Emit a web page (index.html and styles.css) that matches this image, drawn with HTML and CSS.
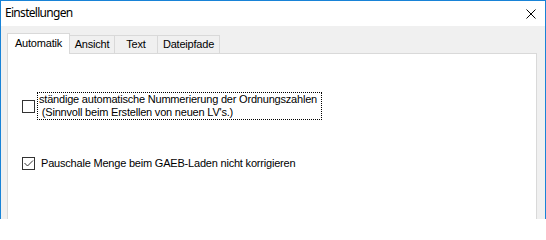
FILE: index.html
```html
<!DOCTYPE html>
<html>
<head>
<meta charset="utf-8">
<link rel="stylesheet" href="styles.css">
</head>
<body>
<div class="window">
  <div class="titlebar">
    <span class="title">Einstellungen</span>
    <svg class="close" width="10" height="10" viewBox="0 0 10 10"><path d="M0.5 0.5 L9.5 9.5 M9.5 0.5 L0.5 9.5" stroke="#000" stroke-width="1"/></svg>
  </div>
  <div class="client">
    <div class="tabs">
      <div class="tab active">Automatik</div>
      <div class="tab t-ansicht">Ansicht</div>
      <div class="tab t-text">Text</div>
      <div class="tab t-datei">Dateipfade</div>
    </div>
    <div class="panel">
      <div class="option opt1">
        <span class="box"></span>
        <span class="label focus">ständige automatische Nummerierung der Ordnungszahlen<br>&nbsp;(Sinnvoll beim Erstellen von neuen LV's.)</span>
      </div>
      <div class="option opt2">
        <span class="box checked"><svg width="11" height="11" viewBox="0 0 11 11"><path d="M1.5 5 L4.5 8 L10 2.5" fill="none" stroke="#333" stroke-width="1"/></svg></span>
        <span class="label">Pauschale Menge beim GAEB-Laden nicht korrigieren</span>
      </div>
    </div>
  </div>
</div>
</body>
</html>
```
FILE: styles.css
```css
html, body {
  margin: 0;
  padding: 0;
  background: #ffffff;
}
.window {
  width: 546px;
  height: 219px;
  box-sizing: border-box;
  border: 1px solid #1883d7;
  border-bottom: none;
  display: flex;
  flex-direction: column;
  overflow: hidden;
}
.titlebar {
  height: 25px;
  background: #ffffff;
  display: flex;
  align-items: center;
  justify-content: space-between;
  padding: 0 9px 0 4px;
  flex: none;
}
.title {
  font-family: "Noto Sans", "Open Sans", sans-serif;
  font-size: 12px;
  letter-spacing: -0.7px;
  color: #000;
  margin-top: -2px;
}
.close {
  display: block;
}
.client {
  flex: 1;
  background: #f0f0f0;
  padding: 7px 8px 0 6px;
  display: flex;
  flex-direction: column;
}
.tabs {
  display: flex;
  align-items: flex-end;
  height: 20px;
  position: relative;
  z-index: 1;
}
.tab {
  font-family: "Liberation Sans", Arial, sans-serif;
  font-size: 11px;
  letter-spacing: -0.2px;
  color: #000;
  box-sizing: border-box;
  height: 18px;
  border: 1px solid #d9d9d9;
  border-bottom: none;
  border-left: none;
  background: #f0f0f0;
  padding-top: 2px;
  text-align: center;
}
.tab.active {
  height: 21px;
  margin-bottom: -1px;
  background: #ffffff;
  border-left: 1px solid #d9d9d9;
  width: 63px;
  padding-top: 3px;
}
.t-ansicht { width: 45px; }
.t-text { width: 43px; }
.t-datei { width: 62px; }
.panel {
  flex: 1;
  background: #ffffff;
  border: 1px solid #d9d9d9;
  border-bottom: none;
  padding: 38px 0 0 14px;
  display: flex;
  flex-direction: column;
}
.option {
  display: flex;
  align-items: center;
  font-family: "Liberation Sans", Arial, sans-serif;
  font-size: 11px;
  letter-spacing: -0.2px;
  color: #000;
}
.box {
  width: 13px;
  height: 13px;
  box-sizing: border-box;
  border: 1px solid #333333;
  background: #fff;
  flex: none;
  display: flex;
  align-items: center;
  justify-content: center;
}
.box svg { display: block; }
.label {
  line-height: 13px;
}
.opt1 .label {
  margin-left: 2px;
  border: 1px dotted #000;
  padding: 0 4px 0 1px;
}
.opt2 {
  margin-top: 37px;
}
.opt2 .label {
  margin-left: 6px;
}
```
